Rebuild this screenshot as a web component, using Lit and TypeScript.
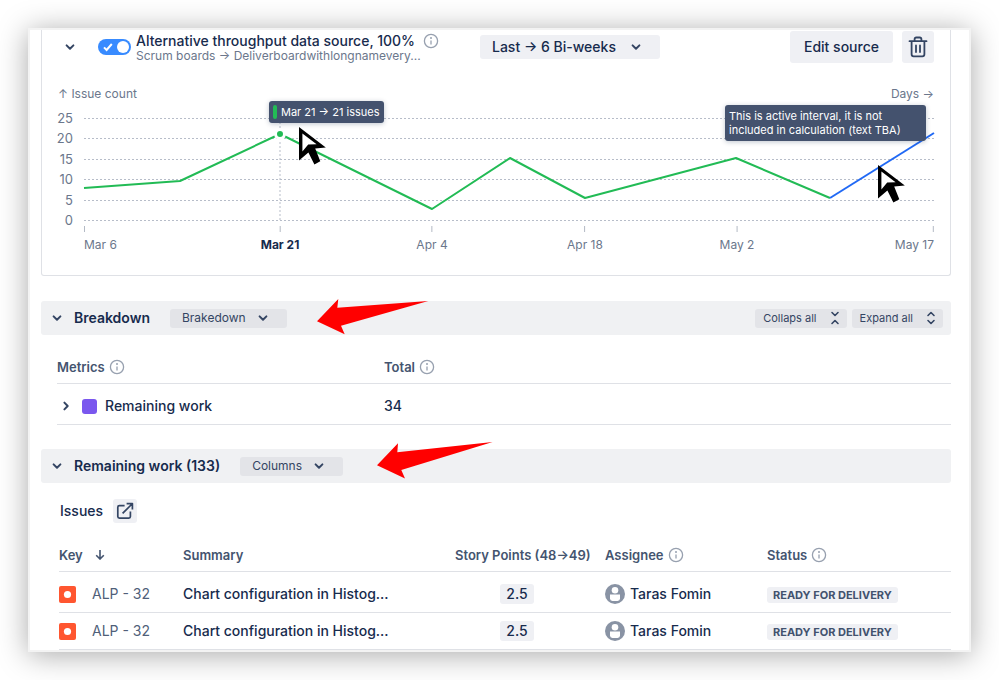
import { LitElement, html, svg, css } from "lit";
import { customElement, property } from "lit/decorators.js";
import { classMap } from "lit/directives/class-map.js";
import { styleMap } from "lit/directives/style-map.js";

const chevronDown = html`<svg class="icon chevron" viewBox="0 0 12 12" aria-hidden="true"><path d="M2.6 4.4 6 7.7 9.4 4.4" /></svg>`;
const chevronRight = html`<svg class="icon chevron" viewBox="0 0 12 12" aria-hidden="true"><path d="M4.4 2.6 7.7 6 4.4 9.4" /></svg>`;
const info = html`<svg class="icon info" viewBox="0 0 16 16" role="img" aria-label="Info">
  <circle cx="8" cy="8" r="6.6" /><path d="M8 7.4v4" /><circle class="dot" cx="8" cy="5" r="1" />
</svg>`;
const cursor = html`<svg class="pointer" viewBox="0 0 28 40" width="28" height="40" aria-hidden="true">
  <path d="M0 0 26.8 20.6 16.2 21.4 21.3 34.3 15.4 37.4 9.4 25.4 0 33.4Z" fill="#000" />
  <path d="M3.4 6.6 17.6 17.3 9.2 17.5 3.4 24.6Z" fill="#fff" />
</svg>`;

const shared = css`
  * { box-sizing: border-box; }
  button { border: 0; margin: 0; padding: 0; background: none; font: inherit; color: inherit; cursor: pointer; }
  .icon { display: block; flex: none; fill: none; stroke: currentColor; }
  .chevron { width: 12px; height: 12px; stroke-width: 2; stroke-linecap: round; stroke-linejoin: round; }
  .info { width: 16px; height: 16px; stroke: #97a0af; stroke-width: 1.3; }
  .info .dot { fill: #97a0af; stroke: none; }
  .toggle-button { display: grid; place-items: center; width: 24px; height: 24px; color: #344563; }
`;

@customElement("drop-down")
class DropDown extends LitElement {
  @property() label = "";
  @property() value = "";
  @property({ type: Boolean, reflect: true }) large = false;

  static styles = [shared, css`
    :host { display: inline-grid; color: #344563; font-size: 12px; }
    select, .chevron { grid-area: 1 / 1; align-self: center; }
    select {
      appearance: none; height: 19px; margin: 0; padding: 0 41px 0 12px; border: 0; border-radius: 3px;
      background: #e3e4e8; color: inherit; font: inherit; cursor: pointer;
    }
    :host([large]) { color: #172b4d; font-size: 14px; font-weight: 500; }
    :host([large]) select { height: 24px; padding-right: 44px; background: #eff0f4; }
    .chevron { justify-self: end; margin-right: 18px; color: #344563; pointer-events: none; }
  `];

  render() {
    return html`<select aria-label=${this.label}><option>${this.value}</option></select>${chevronDown}`;
  }
}

@customElement("throughput-chart")
class ThroughputChart extends LitElement {
  static styles = [shared, css`
    :host { display: block; color: #6b778c; font-size: 12px; line-height: 16px; }
    .titles { display: flex; justify-content: space-between; margin-bottom: 8px; }
    .body { display: grid; grid-template-columns: 15px 1fr; column-gap: 11px; }
    .scale { display: flex; flex-direction: column; justify-content: space-between; align-items: flex-end; height: 118px; font-size: 13px; }
    .plot { position: relative; height: 102px; margin: 8px 0; }
    .lines { display: block; width: 100%; height: 100%; overflow: visible; fill: none; }
    .lines * { vector-effect: non-scaling-stroke; }
    .grid { stroke: #b7bdc9; stroke-dasharray: 2 2; }
    .past { stroke: #22bb55; stroke-width: 2; stroke-linejoin: round; }
    .active { stroke: #2069f5; stroke-width: 2; }
    .marker {
      position: absolute; width: 12px; height: 12px; margin: -6px; border: 3px solid #fff;
      border-radius: 50%; background: #22bb55;
    }
    .tip {
      position: absolute; display: flex; gap: 4px; padding: 4px; border-radius: 3px;
      background: #44526e; color: #fff; font-size: 11px; line-height: 14px; white-space: nowrap;
      box-shadow: 0 1px 5px rgba(9, 30, 66, 0.25);
    }
    .tip i { width: 4px; border-radius: 2px; background: #22bb55; }
    .point { bottom: 97px; }
    .note { right: 8px; bottom: 79px; width: 201px; white-space: normal; }
    .cursor { position: absolute; }
    .dates { grid-column: 2; position: relative; height: 26px; margin-top: -2px; }
    .date { position: absolute; transform: translateX(-50%); white-space: nowrap; }
    .date::before { content: ""; display: block; width: 1px; height: 6px; margin: 0 auto 5px; background: #b3bac5; }
    .date.start { transform: none; }
    .date.start::before { margin-left: 0; }
    .date.end { transform: translateX(-100%); }
    .date.end::before { margin-right: 0; }
    .date.selected { color: #172b4d; font-weight: 700; }
  `];

  private past = [[0, 70], [96, 63], [196, 16], [348, 91], [426, 40], [501, 80], [652, 40], [746, 80]];
  private cursors = [[215, 9], [794, 47]];
  private dates = [
    { at: 0, text: "Mar 6", edge: "start" },
    { at: 196, text: "Mar 21", selected: true },
    { at: 348, text: "Apr 4" },
    { at: 501, text: "Apr 18" },
    { at: 653, text: "May 2" },
    { at: 850, text: "May 17", edge: "end" },
  ] as { at: number; text: string; edge?: string; selected?: boolean }[];

  render() {
    const left = (x: number) => `${(x / 850) * 100}%`;
    return html`
      <div class="titles"><span>↑ Issue count</span><span>Days →</span></div>
      <div class="body">
        <div class="scale">${[25, 20, 15, 10, 5, 0].map((n) => html`<span>${n}</span>`)}</div>
        <div class="plot">
          <svg class="lines" viewBox="0 0 850 102" preserveAspectRatio="none" role="img" aria-label="Issues completed per interval">
            ${[0, 1, 2, 3, 4, 5].map((i) => svg`<path class="grid" d="M0 ${Math.round(i * 20.4) + 0.5}H850" />`)}
            <path class="grid" d="M196 0V102" />
            <polyline class="past" points=${this.past.map((p) => p.join()).join(" ")} />
            <path class="active" d="M746 80 850 15" />
          </svg>
          <span class="marker" style=${styleMap({ left: left(196), top: "16px" })}></span>
          <div class="tip point" role="tooltip" style=${styleMap({ left: left(185) })}><i></i>Mar 21 → 21 issues</div>
          <div class="tip note" role="tooltip">This is active interval, it is not included in calculation (text TBA)</div>
          ${this.cursors.map(([x, y]) => html`<span class="cursor" style=${styleMap({ left: left(x), top: `${y}px` })}>${cursor}</span>`)}
        </div>
        <div class="dates">
          ${this.dates.map((d) => html`<span
            class=${classMap({ date: true, start: d.edge === "start", end: d.edge === "end", selected: !!d.selected })}
            style=${styleMap({ left: left(d.at) })}>${d.text}</span>`)}
        </div>
      </div>`;
  }
}

@customElement("app-root")
class AppRoot extends LitElement {
  static styles = [shared, css`
    :host {
      display: block; padding: 28px; background: #fff; color: #172b4d;
      font: 14px/16px Inter, "Noto Sans", sans-serif;
    }
    h2, h3, p { margin: 0; font: inherit; }
    .sheet {
      overflow: hidden; padding: 0 18px 0 11px; border: 2px solid #f3f3f3; background: #fff;
      box-shadow: 0 3px 28px rgba(0, 0, 0, 0.34);
    }
    .card { margin-bottom: 25px; padding: 1px 16px 23px; border: 1px solid #dfe1e6; border-top: 0; border-radius: 0 0 3px 3px; }
    .source { display: flex; align-items: center; margin-bottom: 23px; }
    .switch { display: grid; align-items: center; margin: 0 5px 0 16px; }
    .switch > * { grid-area: 1 / 1; }
    .switch input {
      appearance: none; display: flex; justify-content: flex-end; width: 33px; height: 16px; margin: 0; padding: 2px;
      border-radius: 8px; background: #388bff; cursor: pointer;
    }
    .switch input::before { content: ""; width: 12px; height: 12px; border-radius: 50%; background: #fff; }
    .check { width: 10px; height: 10px; margin-left: 5px; color: #fff; stroke-width: 2; pointer-events: none; }
    .names { flex: 0 1 344px; min-width: 0; padding: 2px 16px 0 0; }
    .name { display: flex; gap: 8px; white-space: nowrap; font-weight: 500; }
    .path { color: #6b778c; font-size: 12px; line-height: 14px; }
    .edit { height: 32px; margin-left: auto; padding: 0 14px; border-radius: 3px; background: #eff0f4; font-weight: 500; white-space: nowrap; }
    .square { display: grid; place-items: center; border-radius: 3px; background: #eff0f4; color: #344563; }
    .trash { width: 32px; height: 32px; margin-left: 9px; }
    .open { width: 24px; height: 24px; }
    .bar { position: relative; display: flex; align-items: center; height: 34px; padding: 0 8px 0 4px; border-radius: 3px; background: #f0f1f3; }
    .bar h2 { margin: 0 20px 0 5px; font-weight: 600; }
    .arrow { position: absolute; width: 116px; height: 37px; fill: #f00; }
    .arrow.one { left: 276px; top: -2px; }
    .arrow.two { left: 336px; top: -7px; }
    .actions { display: flex; gap: 5px; margin-left: auto; }
    .action { display: flex; align-items: center; gap: 12px; height: 19px; padding: 0 6px 0 8px; border-radius: 3px; background: #e3e4e8; color: #344563; font-size: 11px; }
    .fold { width: 12px; height: 14px; stroke-width: 1.6; stroke-linecap: round; stroke-linejoin: round; }
    table { border-collapse: separate; border-spacing: 0; table-layout: fixed; }
    th, td { padding: 0; border-bottom: 1px solid #dfe1e6; text-align: left; white-space: nowrap; }
    th { height: 49px; padding-bottom: 8px; vertical-align: bottom; color: #44546f; font-size: 13px; font-weight: 600; }
    td { height: 37px; }
    tbody tr:first-child td { height: 41px; padding-top: 4px; }
    .line { display: flex; align-items: center; gap: 4px; }
    .metrics { width: calc(100% - 16px); margin: 0 0 24px 16px; font-weight: 500; }
    .metrics .metric-col { width: 327px; }
    .expand { width: 18px; height: 24px; }
    .swatch { width: 15px; height: 15px; margin: 0 4px 0 3px; border-radius: 3px; background: #7a57ee; }
    .issues-title { display: flex; align-items: center; gap: 10px; margin: 16px 0 0 19px; font-weight: 500; }
    .issues { width: calc(100% - 18px); margin-left: 18px; font-weight: 500; }
    .issues .key-col { width: 124px; }
    .issues .points-col { width: 150px; }
    .issues .assignee-col { width: 162px; }
    .issues .status-col { width: 184px; }
    .sort { width: 10px; height: 10px; margin-left: 8px; stroke-width: 1.6; }
    .key { gap: 16px; color: #505f79; font-weight: 400; }
    .bug { width: 17px; height: 17px; }
    td.points { padding-right: 26px; text-align: center; }
    .count { display: inline-block; padding: 2px 6px; border-radius: 3px; background: #eff0f4; }
    .person { gap: 5px; }
    .avatar { width: 20px; height: 20px; }
    .lozenge { display: inline-block; padding: 0 6px; border-radius: 3px; background: #eff0f4; color: #42526e; font-size: 11px; font-weight: 700; }
  `];

  private issues = [1, 2].map(() => ({
    key: "ALP - 32", summary: "Chart configuration in Histog...", points: "2.5", assignee: "Taras Fomin", status: "READY FOR DELIVERY",
  }));

  render() {
    return html`
      <main class="sheet">
        <section class="card">
          <div class="source">
            <button class="toggle-button" aria-label="Collapse source">${chevronDown}</button>
            <label class="switch">
              <input type="checkbox" role="switch" checked aria-label="Use alternative source" />
              <svg class="icon check" viewBox="0 0 10 10" aria-hidden="true"><path d="M1 5.4 3.6 8 8.8 2" /></svg>
            </label>
            <div class="names">
              <h2 class="name">Alternative throughput data source, 100% ${info}</h2>
              <p class="path">Scrum boards → Deliverboardwithlongnamevery...</p>
            </div>
            <drop-down large label="Interval" value="Last → 6 Bi-weeks"></drop-down>
            <button class="edit">Edit source</button>
            <button class="square trash" aria-label="Delete source">
              <svg class="icon" width="20" height="22" viewBox="0 0 20 22" stroke-width="1.8" stroke-linecap="round" stroke-linejoin="round">
                <path d="M1.5 5.2h17M6.6 5V3.2q0-1.7 1.7-1.7h3.4q1.7 0 1.7 1.7V5M3.6 5.5v12.8q0 2 2 2h8.8q2 0 2-2V5.5M8 9.5v6.6M12 9.5v6.6" />
              </svg>
            </button>
          </div>
          <throughput-chart></throughput-chart>
        </section>

        <section>
          <div class="bar">
            <button class="toggle-button" aria-label="Collapse breakdown">${chevronDown}</button>
            <h2>Breakdown</h2>
            <drop-down label="Breakdown by" value="Brakedown"></drop-down>
            <svg class="arrow one" viewBox="0 0 116 37" aria-hidden="true"><path d="M0 22.3 21.3 0 20.3 8.7 111.3 2 24 26.7 27.7 35.3Z" /></svg>
            <div class="actions">
              <button class="action">Collaps all
                <svg class="icon fold" viewBox="0 0 12 14" aria-hidden="true"><path d="M3 1.5 6 4.5 9 1.5M3 12.5 6 9.5 9 12.5" /></svg>
              </button>
              <button class="action">Expand all
                <svg class="icon fold" viewBox="0 0 12 14" aria-hidden="true"><path d="M3 4.5 6 1.5 9 4.5M3 9.5 6 12.5 9 9.5" /></svg>
              </button>
            </div>
          </div>
          <table class="metrics">
            <colgroup><col class="metric-col" /><col /></colgroup>
            <thead><tr>
              <th><span class="line">Metrics ${info}</span></th>
              <th><span class="line">Total ${info}</span></th>
            </tr></thead>
            <tbody><tr>
              <td><span class="line">
                <button class="toggle-button expand" aria-label="Expand remaining work">${chevronRight}</button>
                <i class="swatch"></i>Remaining work
              </span></td>
              <td>34</td>
            </tr></tbody>
          </table>
        </section>

        <section>
          <div class="bar">
            <button class="toggle-button" aria-label="Collapse remaining work">${chevronDown}</button>
            <h2>Remaining work (133)</h2>
            <drop-down label="Columns" value="Columns"></drop-down>
            <svg class="arrow two" viewBox="0 0 116 37" aria-hidden="true"><path d="M0 23.3 21 1.3 20.3 10.3 115.6 0 24.3 28 28 36.6Z" /></svg>
          </div>
          <div class="issues-title">
            <h3>Issues</h3>
            <button class="square open" aria-label="Open issues">
              <svg class="icon" width="18" height="18" viewBox="0 0 18 18" stroke-width="1.7" stroke-linejoin="round">
                <path d="M8.6 3.6H3.4q-1.6 0-1.6 1.6v9.4q0 1.6 1.6 1.6h9.4q1.6 0 1.6-1.6V9.4M6.6 11.4 16 2M10.6 1.6h5.8v5.8" />
              </svg>
            </button>
          </div>
          <table class="issues">
            <colgroup><col class="key-col" /><col /><col class="points-col" /><col class="assignee-col" /><col class="status-col" /></colgroup>
            <thead><tr>
              <th><span class="line">Key
                <svg class="icon sort" viewBox="0 0 10 10" aria-label="Sorted descending"><path d="M5 0V9M1.2 5.2 5 9 8.8 5.2" /></svg>
              </span></th>
              <th>Summary</th>
              <th>Story Points (48→49)</th>
              <th><span class="line">Assignee ${info}</span></th>
              <th><span class="line">Status ${info}</span></th>
            </tr></thead>
            <tbody>
              ${this.issues.map((i) => html`<tr>
                <td><span class="line key">
                  <svg class="bug" viewBox="0 0 17 17" aria-label="Bug"><rect width="17" height="17" rx="2" fill="#ff5630" /><circle cx="8.5" cy="8.5" r="3.6" fill="#fff" /></svg>${i.key}
                </span></td>
                <td>${i.summary}</td>
                <td class="points"><span class="count">${i.points}</span></td>
                <td><span class="line person">
                  <svg class="avatar" viewBox="0 0 20 20" aria-hidden="true">
                    <circle cx="10" cy="10" r="10" fill="#8993a4" /><circle cx="10" cy="6.2" r="3.3" fill="#fff" />
                    <path d="M5 10.6h10v4q0 2.4-2.4 2.4H7.4Q5 17 5 14.6Z" fill="#fff" />
                  </svg>${i.assignee}
                </span></td>
                <td><span class="lozenge">${i.status}</span></td>
              </tr>`)}
            </tbody>
          </table>
        </section>
      </main>`;
  }
}
